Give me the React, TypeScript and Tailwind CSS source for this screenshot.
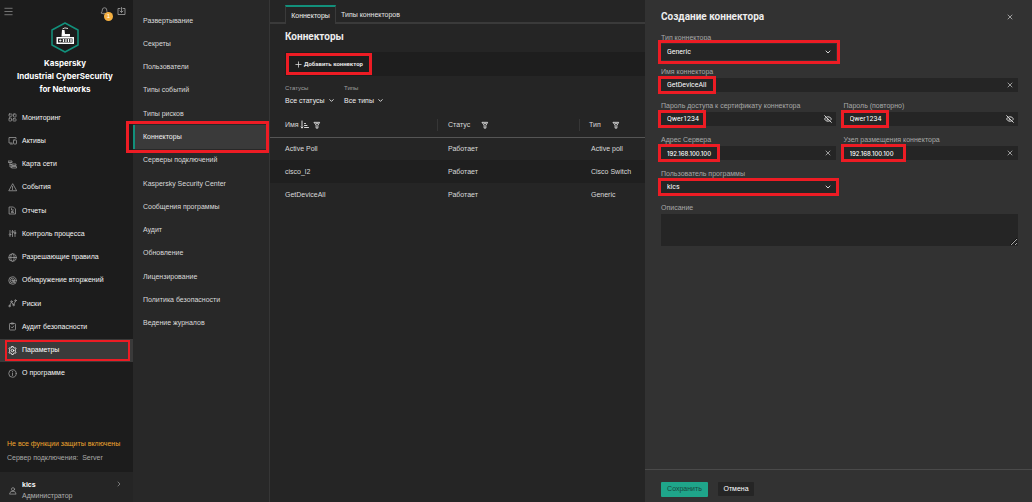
import type { ReactNode } from "react";
import {
  Bell,
  ChevronDown,
  ChevronRight,
  EyeOff,
  Menu,
  Plus,
  X,
} from "lucide-react";

const mark = "pointer-events-none absolute z-10 border-[#ed1c24]";

function Glyph({ children, className = "size-[9px]" }: { children: ReactNode; className?: string }) {
  return (
    <svg
      viewBox="0 0 18 18"
      className={`shrink-0 ${className}`}
      fill="none"
      stroke="currentColor"
      strokeWidth="1.6"
      strokeLinecap="round"
      strokeLinejoin="round"
      aria-hidden="true"
    >
      {children}
    </svg>
  );
}

const icons: Record<string, ReactNode> = {
  monitor: (
    <>
      <rect x="2" y="2" width="6" height="4.500" rx="1" />
      <rect x="11" y="2" width="5" height="6" rx="1" />
      <rect x="2" y="10" width="5" height="6" rx="1" />
      <rect x="10" y="11.500" width="6" height="4.500" rx="1" />
    </>
  ),
  assets: (
    <>
      <path d="M16 5V3H2v11h6M5 16h4" />
      <rect x="11" y="8" width="6" height="8" rx="1" />
    </>
  ),
  map: (
    <>
      <path d="M1 2h7v3H1zM4 5v9h4M4 9h4" />
      <path d="M8 8h8v3H8zM8 13h9v3H8z" />
    </>
  ),
  events: (
    <>
      <path d="M9 2 1.500 15.500h15z" />
      <path d="M9 7v4M9 13v.3" />
    </>
  ),
  reports: (
    <>
      <path d="M3 2h8l4 4v10H3z" />
      <path d="M7 5v3h4M7 13v-2M9 13v-3M11 13v-1" />
    </>
  ),
  process: (
    <>
      <path d="M4 3v6M4 13v2M9 3v1M9 8v7M14 3v3M14 10v5" />
      <circle cx="4" cy="11" r="1.500" />
      <circle cx="9" cy="6" r="1.500" />
      <circle cx="14" cy="8" r="1.500" />
    </>
  ),
  rules: (
    <>
      <circle cx="9" cy="9" r="7.500" />
      <ellipse cx="9" cy="9" rx="3.500" ry="7.500" />
      <path d="M2 9h14" />
    </>
  ),
  intrusion: (
    <>
      <circle cx="9" cy="9" r="7.500" />
      <circle cx="9" cy="9" r="4.500" />
      <circle cx="9" cy="9" r="1.500" />
      <path d="m9 9 5.500 5.500" />
    </>
  ),
  risks: (
    <>
      <path d="m3 14 4-8 4 6 4-8" />
      <circle cx="3" cy="14" r="1.500" />
      <circle cx="7" cy="5" r="1.500" />
      <circle cx="11" cy="12" r="1.500" />
      <circle cx="15" cy="3" r="1.500" />
    </>
  ),
  audit: (
    <>
      <rect x="3" y="3" width="12" height="13" rx="1.500" />
      <path d="M7 2h4v2H7zM6.500 10l2 2 3-4" />
    </>
  ),
  settings: (
    <>
      <path d="M7.500 1h3l.5 2.300 1.500.8 2.200-.8 1.500 2.600L14.500 7.500v3l1.700 1.600-1.500 2.600-2.200-.8-1.500.8-.5 2.300h-3L7 14.700l-1.500-.8-2.200.8-1.500-2.600 1.700-1.600v-3L1.800 5.900l1.500-2.600 2.200.8L7 3.300z" />
      <circle cx="9" cy="9" r="2.500" />
    </>
  ),
  about: (
    <>
      <circle cx="9" cy="9" r="7.500" />
      <path d="M9 8v5M9 5v.3" />
    </>
  ),
};

const mainNav = [
  ["monitor", "Мониторинг"],
  ["assets", "Активы"],
  ["map", "Карта сети"],
  ["events", "События"],
  ["reports", "Отчеты"],
  ["process", "Контроль процесса"],
  ["rules", "Разрешающие правила"],
  ["intrusion", "Обнаружение вторжений"],
  ["risks", "Риски"],
  ["audit", "Аудит безопасности"],
  ["settings", "Параметры"],
  ["about", "О программе"],
];

const settingsNav = [
  "Развертывание",
  "Секреты",
  "Пользователи",
  "Типы событий",
  "Типы рисков",
  "Коннекторы",
  "Серверы подключений",
  "Kaspersky Security Center",
  "Сообщения программы",
  "Аудит",
  "Обновление",
  "Лицензирование",
  "Политика безопасности",
  "Ведение журналов",
];

const rows = [
  ["Active Poll", "Работает", "Active poll"],
  ["cisco_l2", "Работает", "Cisco Switch"],
  ["GetDeviceAll", "Работает", "Generic"],
];

function Logo() {
  return (
    <svg viewBox="0 0 56 62" className="h-[31px] w-7" aria-hidden="true">
      <path
        d="M28 2 54 16v30L28 60 2 46V16z"
        fill="none"
        stroke="#12907b"
        strokeWidth="3"
        strokeLinejoin="round"
      />
      <path d="M21 29l1-13h5l1 8h10v5z" fill="#fff" />
      <path d="M23 14q4-4 11-1" stroke="#ddd" strokeWidth="2" fill="none" />
      <path d="M11 30h35v14H11z" fill="#fff" />
      <path d="M14 33h29v8H14z" fill="#222" />
      <path d="M16 37h5M18.500 34.500v5" stroke="#fff" strokeWidth="1.500" />
      <path d="M25 34v6M30 34v6M35 34v6M40 34v6" stroke="#fff" strokeWidth="2.500" />
    </svg>
  );
}

function Sidebar() {
  return (
    <aside className="flex w-[133px] shrink-0 flex-col bg-[#1c1c1c]">
      <div className="flex h-[22px] items-center pr-[7px] pl-[3px] text-[#a5a5a5]">
        <button aria-label="Меню">
          <Menu className="size-[11px] text-[#7c7c7c]" strokeWidth={2} />
        </button>
        <button aria-label="Уведомления" className="relative ml-auto">
          <Bell className="size-[9px]" />
          <span className="absolute top-[5px] left-1 flex size-[9px] items-center justify-center rounded-full bg-[#f5b041] text-[6px] leading-none text-white">
            1
          </span>
        </button>
        <button aria-label="Загрузки" className="ml-2">
          <Glyph>
            <path d="M6 3H2v12h14V3h-4M9 1v9M6 8l3 3 3-3" />
          </Glyph>
        </button>
      </div>
      <div className="flex flex-col items-center pr-[3px] text-center">
        <Logo />
        <h1 className="mt-1 font-[Inter,sans-serif] text-[8px] leading-[13px] font-bold whitespace-nowrap text-white">
          Kaspersky
          <br />
          Industrial CyberSecurity
          <br />
          for Networks
        </h1>
      </div>
      <nav className="mt-[10px] grid h-[279px] auto-rows-fr">
        {mainNav.map(([icon, label]) => (
          <a
            key={icon}
            href="#"
            className={`relative flex items-center gap-[5px] pl-2 font-medium ${
              icon === "settings" ? "bg-[#3a3a3a] text-white" : "text-[#f4f4f4]"
            }`}
          >
            <span className={icon === "settings" ? "text-white" : "text-[#9a9a9a]"}>
              <Glyph>{icons[icon]}</Glyph>
            </span>
            {label}
            {icon === "settings" && <span className={`${mark} inset-y-px right-[3px] left-[5px] border-2`} />}
          </a>
        ))}
      </nav>
      <div className="mt-auto px-[7px] pb-[7px]">
        <p className="leading-[14px] text-[#f0a52f]">Не все функции защиты включены</p>
        <p className="leading-[14px] text-[#a8a8a8]">
          Сервер подключения:<span className="ml-1">Server</span>
        </p>
      </div>
      <button className="flex h-[30px] items-center bg-[#252525] pr-[10px] pl-[9px] text-left">
        <Glyph className="mt-2 size-2 text-[#a0a0a0]">
          <circle cx="9" cy="5" r="3.500" />
          <path d="M5 10h8l3 6H2z" />
        </Glyph>
        <span className="ml-[5px] flex flex-col pt-[5px] leading-[11px] text-[#b0b0b0]">
          <b className="font-bold text-white">kics</b>
          Администратор
        </span>
        <ChevronRight className="mb-[6px] ml-auto size-2 text-[#a0a0a0]" />
      </button>
    </aside>
  );
}

function SettingsNav() {
  return (
    <nav className="w-[137px] shrink-0 border-r border-[#363636] bg-[#282828] pt-[9px]">
      <div className="grid h-[326px] auto-rows-fr">
        {settingsNav.map((label) => (
          <a
            key={label}
            href="#"
            className={`relative flex items-center ${
              label === "Коннекторы"
                ? "border-l-2 border-[#12907b] bg-[#3a3a3a] pl-2 text-[#f0f0f0]"
                : "pl-[10px] text-[#dadada]"
            }`}
          >
            {label}
            {label === "Коннекторы" && <span className={`${mark} -inset-y-1 right-0 -left-[9px] border-[3px]`} />}
          </a>
        ))}
      </div>
    </nav>
  );
}

function Filter() {
  return (
    <Glyph className="size-2 text-[#e4e4e4]">
      <path d="M3 3h12l-4 7v6H7v-6zM7 6h4" strokeWidth="2" />
    </Glyph>
  );
}

function Content() {
  return (
    <main className="min-w-0 flex-1 overflow-hidden bg-[#252525]">
      <div className="flex h-6 items-end pt-[5px]">
        <span className="h-[2px] w-[15px] bg-[#3a3a3a]" />
        <button className="h-[19px] w-[51px] border-x border-t-2 border-x-[#3a3a3a] border-t-[#12907b] text-[#f0f0f0]">
          Коннекторы
        </button>
        <button className="h-[19px] flex-1 border-b-2 border-[#3a3a3a] pt-[2px] pl-[5px] text-left text-[#e4e4e4]">
          Типы коннекторов
        </button>
      </div>
      <div className="pl-[15px]">
        <h2 className="pt-[6px] font-[Roboto,sans-serif] text-[10px] leading-[14px] font-bold text-[#ededed]">
          Коннекторы
        </h2>
        <div className="mt-2 flex h-6 bg-[#1e1e1e]">
          <button className="relative flex w-[87px] items-center gap-px pl-[9px] font-[Roboto,sans-serif] text-[6px] font-bold whitespace-nowrap text-[#e4e4e4]">
            <Plus className="size-[9px]" />
            Добавить коннектор
            <span className={`${mark} inset-y-px right-0 left-px border-[3px]`} />
          </button>
        </div>
        <div className="mt-[7px] flex text-[#a0a0a0]">
          <div className="w-[59px]">
            <div className="text-[6px] leading-[11px]">Статусы</div>
            <button className="flex items-center gap-[3px] leading-[13px] text-[#ededed]">
              Все статусы <ChevronDown className="size-[7px]" strokeWidth={3} />
            </button>
          </div>
          <div>
            <div className="text-[6px] leading-[11px]">Типы</div>
            <button className="flex items-center gap-[3px] leading-[13px] text-[#ededed]">
              Все типы <ChevronDown className="size-[7px]" strokeWidth={3} />
            </button>
          </div>
        </div>
      </div>
      <table className="mt-[6px] w-full table-fixed border-collapse text-left text-[#dadada]">
        <colgroup>
          <col className="w-[168px]" />
          <col className="w-[142px]" />
          <col />
        </colgroup>
        <thead>
          <tr className="h-6 border-b border-[#555]">
            <th className="p-0 pl-[15px] font-medium">
              <div className="flex h-3 items-center gap-px border-r border-[#363636]">
                Имя
                <Glyph className="size-[9px]">
                  <path d="M4 2v14M2 14l2 2 2-2M9 7h2M9 11h5M9 15h8" strokeWidth="2" />
                </Glyph>
                <span className="ml-[3px]">
                  <Filter />
                </span>
              </div>
            </th>
            <th className="p-0 pl-[10px] font-medium">
              <div className="flex h-3 items-center gap-[11px] border-r border-[#363636]">
                Статус <Filter />
              </div>
            </th>
            <th className="p-0 pl-[9px] font-medium">
              <div className="flex h-3 items-center gap-[11px]">
                Тип <Filter />
              </div>
            </th>
          </tr>
        </thead>
        <tbody>
          {rows.map(([name, status, type]) => (
            <tr key={name} className="h-[23px] even:bg-[#1f1f1f]">
              <td className="p-0 pl-[15px]">{name}</td>
              <td className="p-0 pl-[10px]">{status}</td>
              <td className="p-0 pl-[11px]">{type}</td>
            </tr>
          ))}
        </tbody>
      </table>
    </main>
  );
}

type FieldProps = {
  id: string;
  label: string;
  value: string;
  kind: "select" | "clear" | "secret";
  markClass: string;
  className?: string;
  control?: string;
};

function Field({
  id,
  label,
  value,
  kind,
  markClass,
  className = "",
  control = "h-[14px] font-[Roboto,sans-serif]",
}: FieldProps) {
  const box = `w-full appearance-none bg-[#252525] pl-[6px] text-white outline-none ${control}`;
  return (
    <div className={className}>
      <label htmlFor={id} className="mb-px block leading-[10px] text-[#a8a8a8]">
        {label}
      </label>
      <div className="relative">
        {kind === "select" ? (
          <select id={id} className={`block ${box}`} defaultValue={value}>
            <option>{value}</option>
          </select>
        ) : (
          <input id={id} className={`block ${box}`} defaultValue={value} />
        )}
        <span className="pointer-events-none absolute inset-y-0 right-1 flex items-center text-[#d4d4d4]">
          {kind === "select" && <ChevronDown className="size-2" strokeWidth={3} />}
          {kind === "clear" && <X className="size-2" />}
          {kind === "secret" && <EyeOff className="size-2" strokeWidth={3} />}
        </span>
        <span className={`${mark} ${markClass}`} />
      </div>
    </div>
  );
}

function Panel() {
  return (
    <aside className="flex w-[387px] shrink-0 flex-col bg-[#323232]">
      <header className="flex h-[33px] items-center justify-between pt-px pr-[18px] pl-4">
        <h2 className="font-[Roboto,sans-serif] text-[10px] font-bold text-[#ededed]">Создание коннектора</h2>
        <button aria-label="Закрыть">
          <X className="size-2 text-[#d4d4d4]" />
        </button>
      </header>
      <form className="grid auto-rows-[34px] grid-cols-2 gap-x-2 pr-[14px] pl-4">
        <Field
          id="type"
          label="Тип коннектора"
          value="Generic"
          kind="select"
          control="h-4 font-[Roboto,sans-serif]"
          markClass="-inset-y-1 -left-[3px] -right-[4px] border-[3px]"
        />
        <Field
          id="name"
          label="Имя коннектора"
          value="GetDeviceAll"
          kind="clear"
          className="col-span-2"
          markClass="-inset-y-[2px] -left-[3px] w-[58px] border-[3px]"
        />
        <Field
          id="password"
          label="Пароль доступа к сертификату коннектора"
          value="Qwer1234"
          kind="secret"
          markClass="-inset-y-[2px] -left-[3px] w-12 border-[3px]"
        />
        <Field
          id="repeat"
          label="Пароль (повторно)"
          value="Qwer1234"
          kind="secret"
          markClass="-inset-y-[2px] -left-[3px] w-12 border-[3px]"
        />
        <Field
          id="server"
          label="Адрес Сервера"
          value="192.168.100.100"
          kind="clear"
          control="h-[14px] font-[Inter,sans-serif] text-[6px] font-medium"
          markClass="-inset-y-[2px] -left-[3px] w-[62px] border-[3px]"
        />
        <Field
          id="node"
          label="Узел размещения коннектора"
          value="192.168.100.100"
          kind="clear"
          control="h-[14px] font-[Inter,sans-serif] text-[6px] font-medium"
          markClass="-inset-y-[2px] -left-[3px] w-[65px] border-[3px]"
        />
        <Field
          id="user"
          label="Пользователь программы"
          value="kics"
          kind="select"
          className="col-start-1"
          markClass="-inset-x-[3px] -inset-y-[2px] border-[3px]"
        />
        <div className="col-span-2 col-start-1">
          <label htmlFor="description" className="mb-px block leading-[10px] text-[#a8a8a8]">
            Описание
          </label>
          <textarea id="description" className="block h-8 w-full resize-y bg-[#252525] outline-none" />
        </div>
      </form>
      <footer className="mt-auto flex h-[33px] items-center gap-[10px] border-t border-[#4a4a4a] pt-[6px] pl-4">
        <button className="h-[15px] w-[47px] rounded-[1px] bg-[#1fa58a] text-[#17473d]">Сохранить</button>
        <button className="h-[14px] w-9 rounded-[1px] bg-[#252525] text-white">Отмена</button>
      </footer>
    </aside>
  );
}

export default function App() {
  return (
    <div className="flex min-h-screen bg-[#252525] font-['Liberation_Sans',Arial,sans-serif] text-[7px] leading-[10px]">
      <Sidebar />
      <SettingsNav />
      <Content />
      <Panel />
    </div>
  );
}
